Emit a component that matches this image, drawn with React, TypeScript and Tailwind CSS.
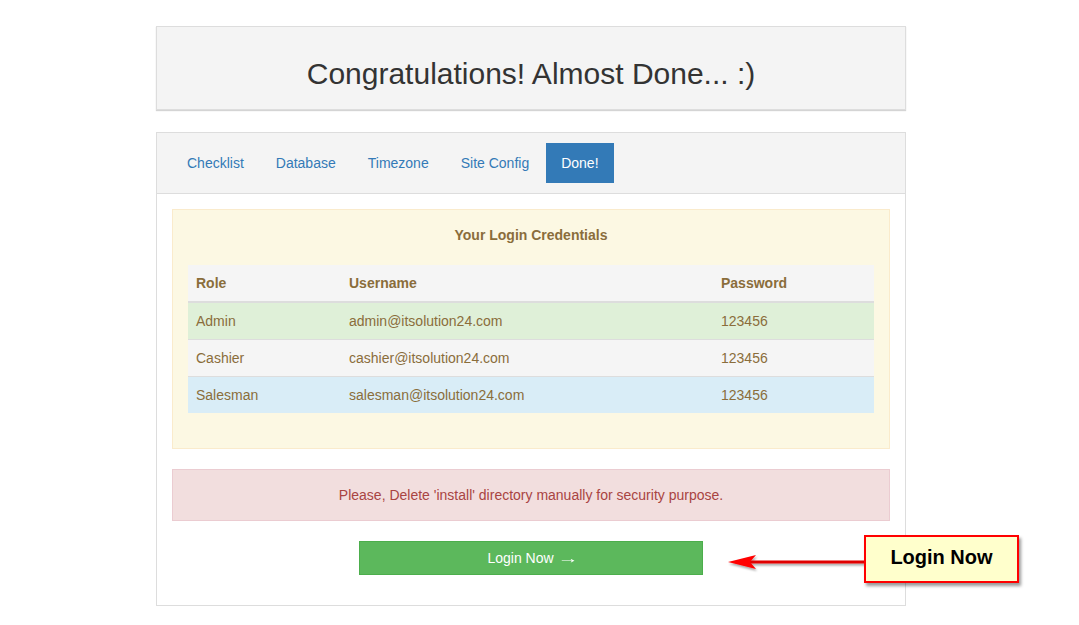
import React from "react";

const rows = [
  { role: "Admin", user: "admin@itsolution24.com", pass: "123456", bg: "bg-[#dff0d8]" },
  { role: "Cashier", user: "cashier@itsolution24.com", pass: "123456", bg: "bg-[#f5f5f5]" },
  { role: "Salesman", user: "salesman@itsolution24.com", pass: "123456", bg: "bg-[#d9edf7]" },
];

export default function App() {
  return (
    <div className="relative w-[1079px] h-[625px] bg-white overflow-hidden text-[14px] leading-[20px] text-[#333]" style={{ fontFamily: '"Liberation Sans", Arial, sans-serif' }}>
      <div className="ml-[156px] w-[750px] pt-[26px]">
        <div className="h-[84px] bg-[#f4f4f4] border border-[#ddd] shadow-[0_1px_1px_#d4d4d4] flex items-center justify-center">
          <h1 className="text-[30px] leading-[34px] text-[#333] pt-[11px]">Congratulations! Almost Done... :)</h1>
        </div>

        <div className="mt-[22px] border border-[#ddd] bg-white">
          <div className="bg-[#f4f4f4] border-b border-[#ddd] px-[15px] pt-[10px] pb-[10px] flex">
            {["Checklist", "Database", "Timezone", "Site Config"].map((t) => (
              <span key={t} className="px-[15px] py-[10px] mr-[2px] text-[#337ab7]">{t}</span>
            ))}
            <span className="px-[15px] py-[10px] bg-[#337ab7] text-white">Done!</span>
          </div>

          <div className="px-[15px] pt-[15px] pb-[30px]">
            <div className="bg-[#fcf8e3] border border-[#faebcc] p-[15px] pb-[15px] text-[#8a6d3b]">
              <div className="text-center font-bold mb-[20px]">Your Login Credentials</div>
              <table className="w-full border-collapse mb-[20px]">
                <thead>
                  <tr className="bg-[#f5f5f5]">
                    <th className="text-left font-bold px-[8px] py-[8px] border-b-2 border-[#ddd] w-[153px]">Role</th>
                    <th className="text-left font-bold px-[8px] py-[8px] border-b-2 border-[#ddd] w-[372px]">Username</th>
                    <th className="text-left font-bold px-[8px] py-[8px] border-b-2 border-[#ddd]">Password</th>
                  </tr>
                </thead>
                <tbody>
                  {rows.map((r, i) => (
                    <tr key={r.role} className={r.bg}>
                      <td className={`px-[8px] py-[8px] ${i > 0 ? "border-t border-[#ddd]" : ""}`}>{r.role}</td>
                      <td className={`px-[8px] py-[8px] ${i > 0 ? "border-t border-[#ddd]" : ""}`}>{r.user}</td>
                      <td className={`px-[8px] py-[8px] ${i > 0 ? "border-t border-[#ddd]" : ""}`}>{r.pass}</td>
                    </tr>
                  ))}
                </tbody>
              </table>
            </div>

            <div className="mt-[20px] bg-[#f2dede] border border-[#ebccd1] text-[#a94442] p-[15px] text-center">
              Please, Delete 'install' directory manually for security purpose.
            </div>

            <div className="mt-[20px] flex justify-center">
              <button className="w-[344px] h-[34px] bg-[#5cb85c] border border-[#4cae4c] text-white text-[14px]">
                Login Now <span className="inline-block scale-x-150 ml-[3px]">→</span>
              </button>
            </div>
          </div>
        </div>
      </div>

      <svg className="absolute left-[720px] top-[548px]" width="150" height="30" viewBox="0 0 150 30">
        <defs>
          <filter id="sh" x="-10%" y="-50%" width="120%" height="200%">
            <feDropShadow dx="1" dy="2" stdDeviation="1.2" floodColor="#000" floodOpacity="0.35" />
          </filter>
        </defs>
        <g filter="url(#sh)">
          <rect x="30" y="12.5" width="118" height="3" fill="#e00000" />
          <polygon points="8,14 36,7 30,14 36,21" fill="#ff0000" />
        </g>
      </svg>

      <div className="absolute left-[864px] top-[535px] w-[155px] h-[48px] bg-[#ffffcc] border-2 border-[#ff0000] shadow-[2px_3px_3px_rgba(0,0,0,0.4)] flex items-center justify-center pb-[4px]">
        <span className="text-[20px] font-bold text-black">Login Now</span>
      </div>
    </div>
  );
}
